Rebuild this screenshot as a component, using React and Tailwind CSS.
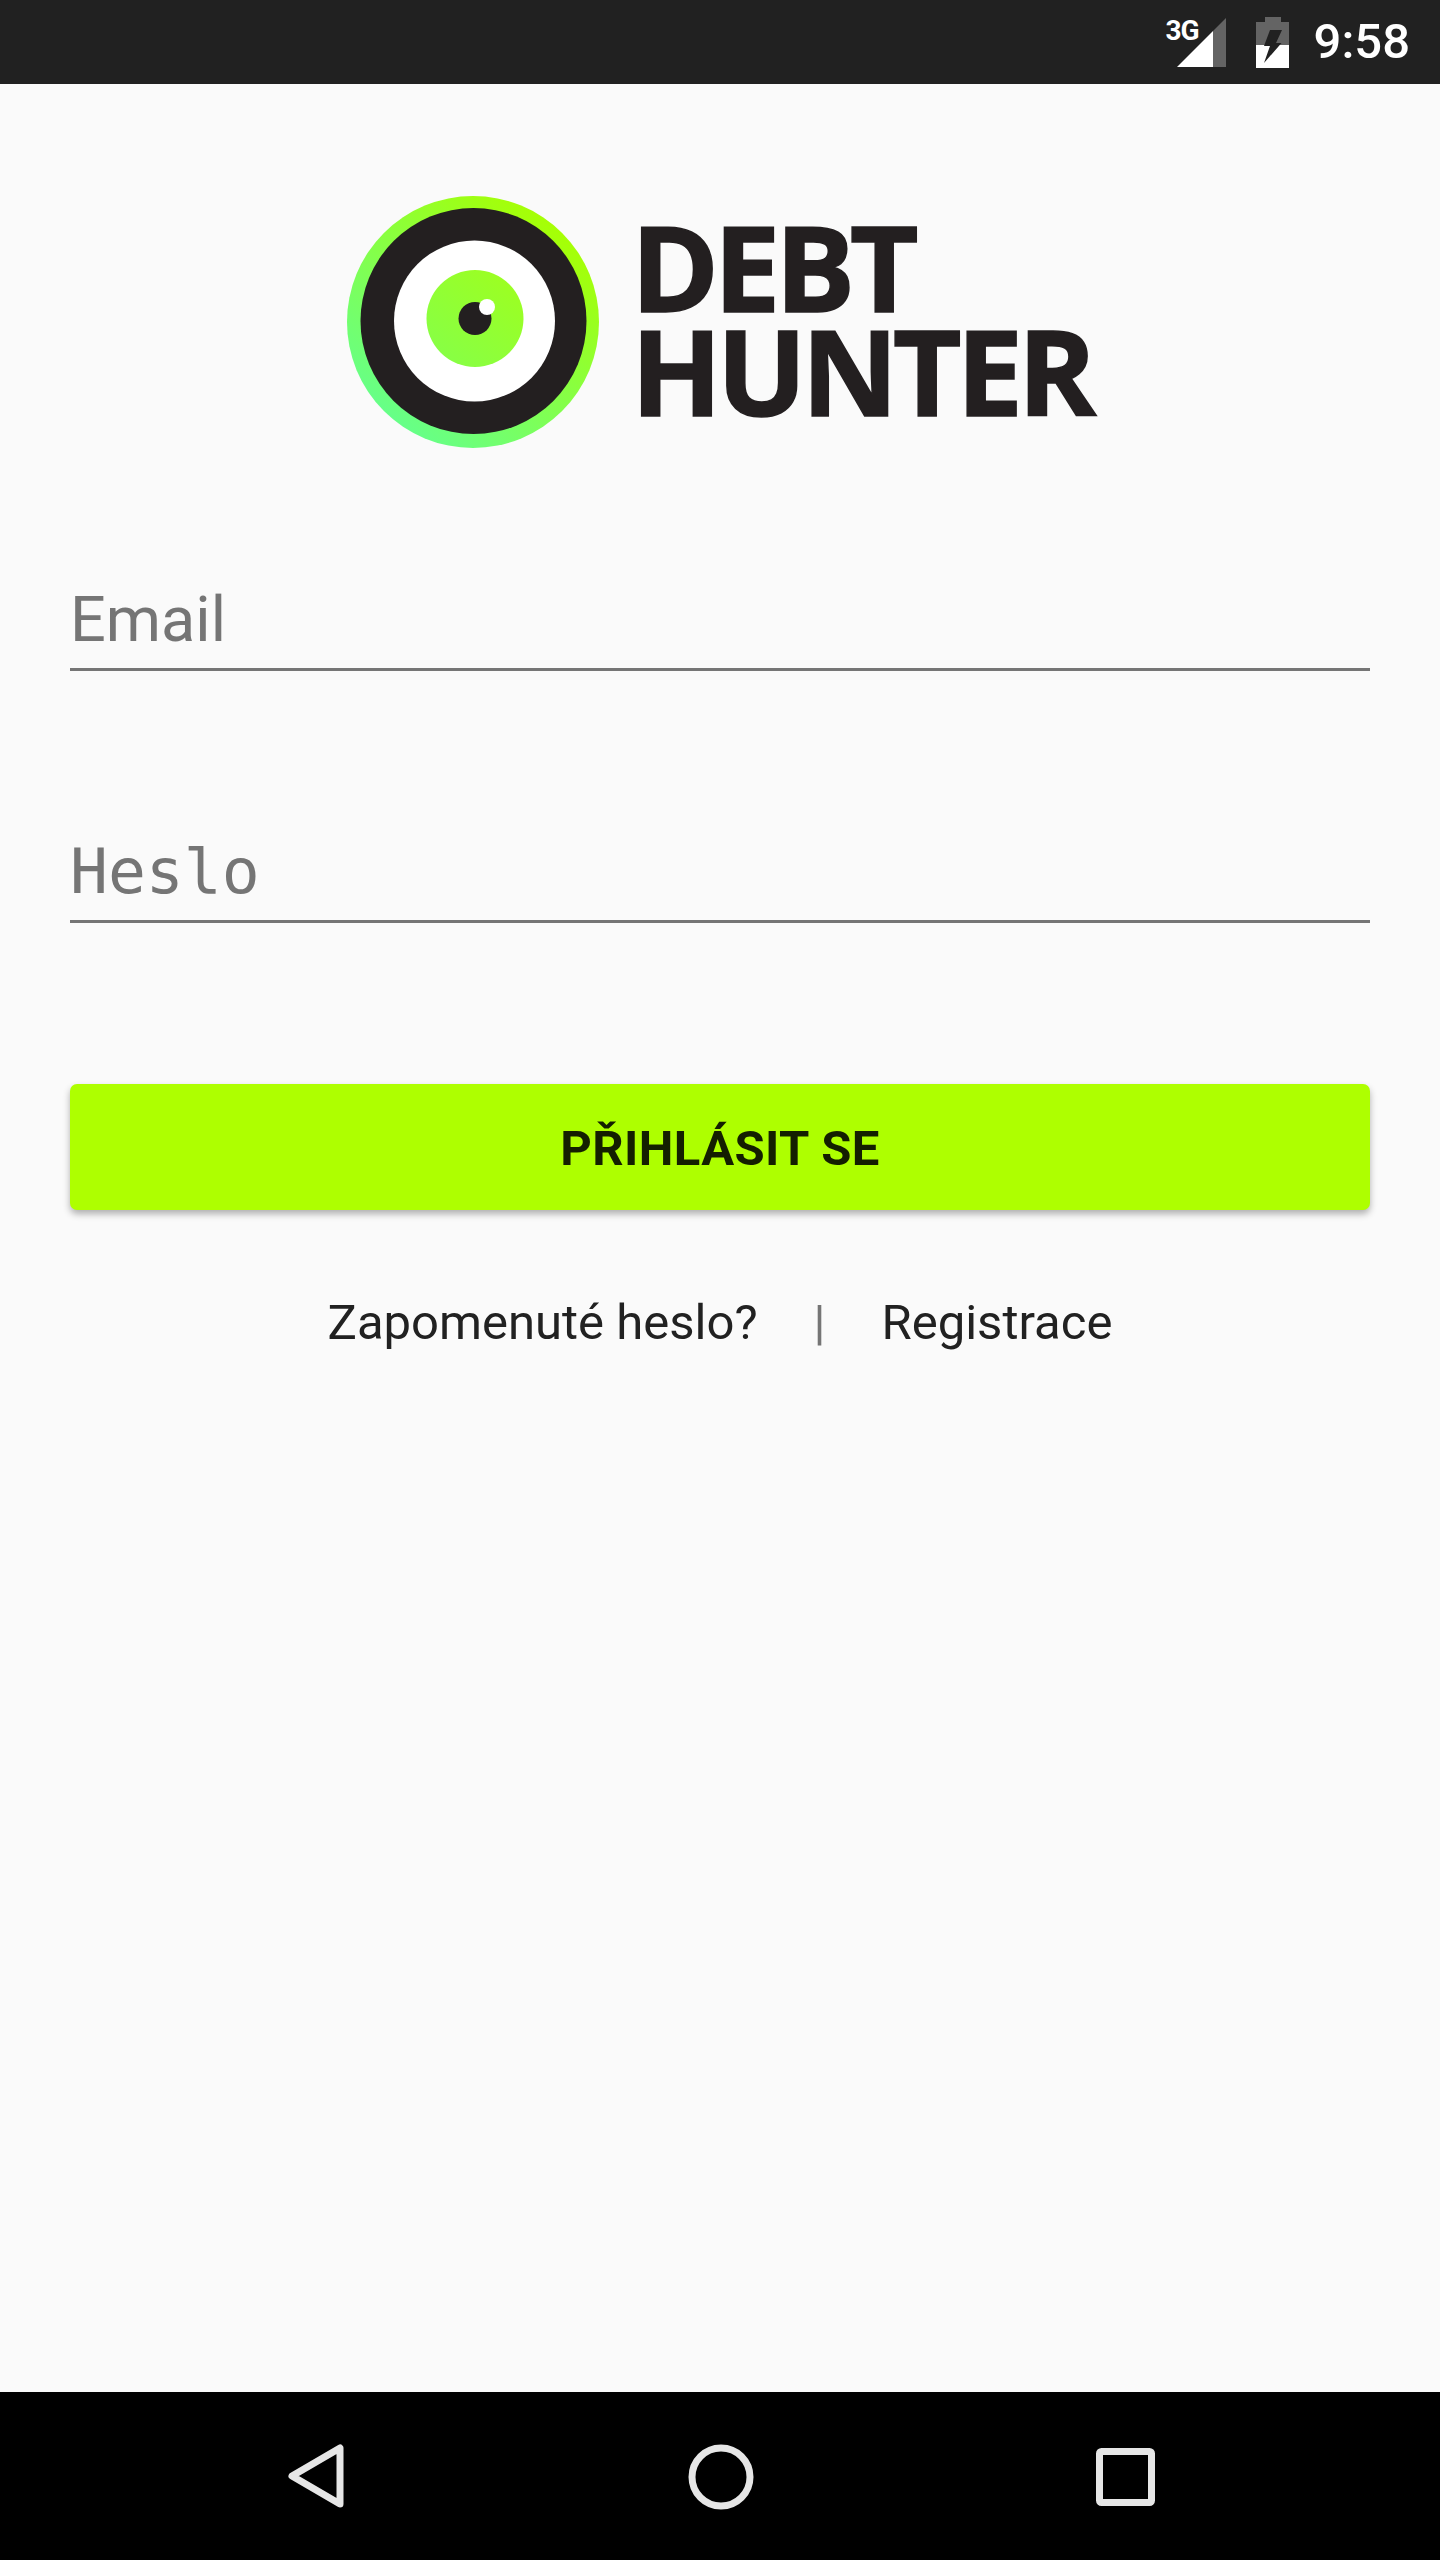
import React from 'react';

// Eye logo, ring has the lime to mint gradient
function LogoEye() {
  return (
    <svg width="252" height="252" viewBox="0 0 252 252" className="shrink-0">
      <defs>
        <linearGradient id="ring" x1="0.85" y1="0.1" x2="0.2" y2="0.9">
          <stop offset="0" stopColor="#a8ff00" />
          <stop offset="1" stopColor="#66ff88" />
        </linearGradient>
        <linearGradient id="iris" x1="0.85" y1="0.1" x2="0.2" y2="0.9">
          <stop offset="0" stopColor="#9cff22" />
          <stop offset="1" stopColor="#88ff44" />
        </linearGradient>
      </defs>
      <circle cx="126" cy="126" r="126" fill="url(#ring)" />
      <circle cx="126.5" cy="125" r="113" fill="#231f20" />
      <circle cx="127.5" cy="125" r="80.5" fill="#ffffff" />
      <circle cx="128" cy="122.5" r="48.5" fill="url(#iris)" />
      <circle cx="128" cy="122.5" r="16.5" fill="#231f20" />
      <circle cx="140" cy="111" r="8" fill="#ffffff" />
    </svg>
  );
}

function Field({ placeholder, type, className }) {
  return (
    <input
      type={type}
      placeholder={placeholder}
      className={`block w-full h-[89px] pb-[12px] bg-transparent border-b-[3px] border-[#757575] outline-none text-[63px] leading-[74px] placeholder:text-[#757575] ${className}`}
    />
  );
}

export default function App() {
  return (
    <div className="w-[1440px] h-[2560px] flex flex-col bg-[#fafafa] font-['Roboto',sans-serif]">
      {/* Status bar */}
      <div className="h-[84px] shrink-0 bg-[#212121] flex items-center justify-end pr-[30px]">
        <div className="relative w-[62px] h-[52px] mr-[28px] shrink-0">
          <span className="absolute left-0 top-0 text-[28px] leading-[30px] font-bold tracking-[-1px] text-white">3G</span>
          <svg width="62" height="52" viewBox="0 0 62 52">
            <path d="M60 2V51H47V15Z" fill="#fff" fillOpacity="0.3" />
            <path d="M11 51L47 15V51Z" fill="#fff" />
          </svg>
        </div>
        <svg width="33" height="51" viewBox="0 0 33 51" className="mr-[25px] shrink-0">
          <path d="M9 0H25V5H33V28H0V5H9Z" fill="#fff" fillOpacity="0.3" />
          <path d="M0 28H33V51H0Z" fill="#fff" />
          <path d="M14 13H26L20 26H25.5L8 46L14 29H8Z" fill="#212121" />
        </svg>
        <span className="text-[49px] leading-[58px] font-medium text-white">9:58</span>
      </div>

      {/* Login form */}
      <main className="flex-1 px-[70px] pt-[112px]">
        <div className="flex items-center pl-[277px]">
          <LogoEye />
          <div className="ml-[32px] -mt-[8px] font-['Open_Sans',sans-serif] font-bold text-[119px] leading-[104px] tracking-[-5.3px] text-[#231f20] [-webkit-text-stroke:1.5px_#231f20]">
            <div>DEBT</div>
            <div>HUNTER</div>
          </div>
        </div>

        <Field type="email" placeholder="Email" className="mt-[134px] font-['Roboto',sans-serif]" />
        <Field type="password" placeholder="Heslo" className="mt-[163px] font-['DejaVu_Sans_Mono',monospace]" />

        <button className="mt-[161px] w-full h-[126px] pt-[4px] rounded-[7px] bg-[#aeff00] text-[49px] font-bold tracking-[0.4px] text-[#141f00] shadow-[0_4px_7px_rgba(0,0,0,0.3)]">
          PŘIHLÁSIT SE
        </button>

        <div className="mt-[84px] flex items-center justify-center text-[49px] leading-[58px] text-[#212121]">
          <span>Zapomenuté heslo?</span>
          <span className="mx-[56px] text-[#757575]">|</span>
          <span>Registrace</span>
        </div>
      </main>

      {/* Navigation bar */}
      <nav className="h-[168px] shrink-0 bg-black relative flex items-center justify-center">
        <svg width="64" height="72" viewBox="0 0 64 72" className="absolute left-[284px] top-[48px]">
          <path d="M56 8V64L8 36Z" fill="none" stroke="#e6e6e6" strokeWidth="7" strokeLinejoin="round" />
        </svg>
        <svg width="66" height="66" viewBox="0 0 66 66" className="absolute left-[688px] top-[52px]">
          <circle cx="33" cy="33" r="29" fill="none" stroke="#e6e6e6" strokeWidth="7" />
        </svg>
        <svg width="60" height="60" viewBox="0 0 60 60" className="absolute left-[1096px] top-[56px]">
          <rect x="3.5" y="3.5" width="52" height="51" rx="2" fill="none" stroke="#e6e6e6" strokeWidth="7" />
        </svg>
      </nav>
    </div>
  );
}
